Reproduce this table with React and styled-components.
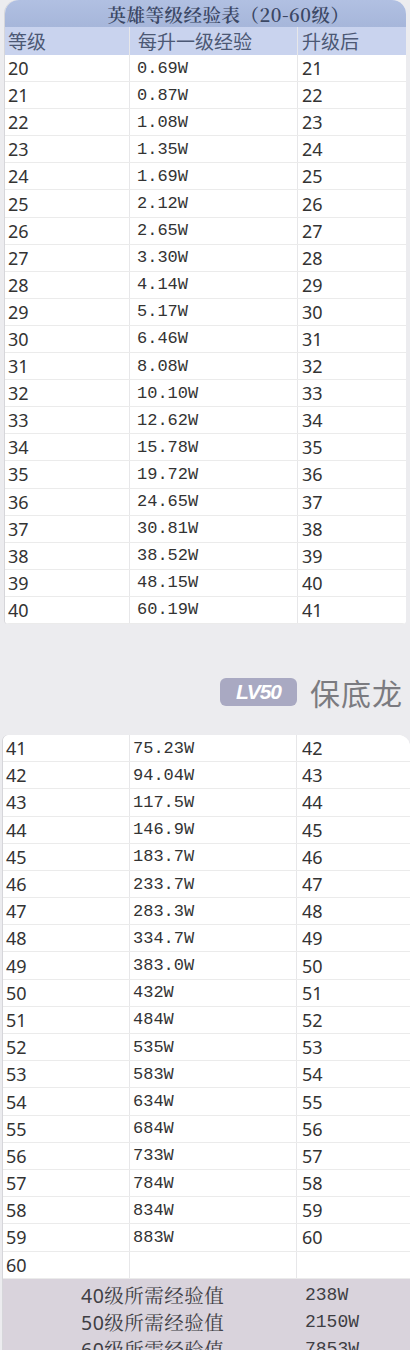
import React from 'react'
import styled, { createGlobalStyle } from 'styled-components'

const GlobalStyle = createGlobalStyle`
  html, body {
    margin: 0;
    padding: 0;
    background: #ececef;
  }
  body {
    width: 410px;
    height: 1350px;
    overflow: hidden;
    font-family: "Noto Sans", "Noto Sans CJK SC", sans-serif;
  }
`

const Page = styled.div`
  display: flex;
  flex-direction: column;
  width: 410px;
`

const Card = styled.div`
  margin-left: ${props => props.offset}px;
  width: ${props => props.width}px;
  background: #fff;
  border-radius: ${props => props.radius};
  overflow: hidden;
  box-shadow: -1px 0 0 #d6d6da;
`

const TitleBar = styled.div`
  height: 27px;
  display: flex;
  align-items: center;
  justify-content: center;
  padding-left: 46px;
  background: linear-gradient(180deg, #b1c0e2 0%, #a6b6da 100%);
  color: #3b4764;
  font-family: "Noto Serif CJK SC", "Noto Sans CJK SC", serif;
  font-size: 18.5px;
  font-weight: 600;
  letter-spacing: 0.5px;
`

const Row = styled.div`
  display: grid;
  grid-template-columns: ${props => props.cols};
  height: ${props => props.h || 27}px;
  background: ${props => props.bg || '#fff'};
  border-bottom: 1px solid ${props => props.line || '#ebebeb'};
  box-sizing: border-box;
`

const Cell = styled.div`
  display: flex;
  align-items: center;
  padding-left: ${props => props.pad}px;
  border-right: ${props => (props.last ? 'none' : '1px solid #e7e7e9')};
  color: ${props => props.color || '#333'};
  font-family: ${props =>
    props.mono
      ? '"Liberation Mono", "Noto Sans CJK SC", monospace'
      : '"Noto Sans", "Noto Sans CJK SC", sans-serif'};
  font-size: ${props => (props.mono ? '17px' : props.big ? '19px' : '18px')};
  white-space: nowrap;
`

const Divider = styled.div`
  height: 111px;
  display: flex;
  align-items: center;
  justify-content: flex-end;
  gap: 13px;
  padding-right: 7px;
  padding-top: 26px;
  box-sizing: border-box;
`

const Badge = styled.div`
  width: 77px;
  height: 28px;
  border-radius: 6px;
  background: #a9a9c2;
  color: #fff;
  display: flex;
  align-items: center;
  justify-content: center;
  font-family: "Liberation Sans", Arial, sans-serif;
  font-style: italic;
  font-weight: 700;
  font-size: 21px;
  letter-spacing: -1px;
`

const BadgeText = styled.div`
  color: #7b7b80;
  font-family: "Noto Sans CJK SC", sans-serif;
  font-size: 30px;
  line-height: 1;
  letter-spacing: 1px;
`

const Footer = styled.div`
  background: #d9d3dc;
  display: flex;
  flex-direction: column;
  padding-top: 2px;
`

const FooterRow = styled.div`
  display: grid;
  grid-template-columns: 299px 1fr;
  height: 27px;
  align-items: center;
  color: #3e3e44;
`

const FooterLabel = styled.div`
  padding-left: 78px;
  font-family: "Noto Sans", "Noto Serif CJK SC", "Noto Sans CJK SC", sans-serif;
  font-size: 19.5px;
  letter-spacing: 0.5px;
`

const FooterValue = styled.div`
  padding-left: 3px;
  font-family: "Liberation Mono", monospace;
  font-size: 18px;
`

const topRows = [
  ['20', '0.69W', '21'],
  ['21', '0.87W', '22'],
  ['22', '1.08W', '23'],
  ['23', '1.35W', '24'],
  ['24', '1.69W', '25'],
  ['25', '2.12W', '26'],
  ['26', '2.65W', '27'],
  ['27', '3.30W', '28'],
  ['28', '4.14W', '29'],
  ['29', '5.17W', '30'],
  ['30', '6.46W', '31'],
  ['31', '8.08W', '32'],
  ['32', '10.10W', '33'],
  ['33', '12.62W', '34'],
  ['34', '15.78W', '35'],
  ['35', '19.72W', '36'],
  ['36', '24.65W', '37'],
  ['37', '30.81W', '38'],
  ['38', '38.52W', '39'],
  ['39', '48.15W', '40'],
  ['40', '60.19W', '41'],
]

const bottomRows = [
  ['41', '75.23W', '42'],
  ['42', '94.04W', '43'],
  ['43', '117.5W', '44'],
  ['44', '146.9W', '45'],
  ['45', '183.7W', '46'],
  ['46', '233.7W', '47'],
  ['47', '283.3W', '48'],
  ['48', '334.7W', '49'],
  ['49', '383.0W', '50'],
  ['50', '432W', '51'],
  ['51', '484W', '52'],
  ['52', '535W', '53'],
  ['53', '583W', '54'],
  ['54', '634W', '55'],
  ['55', '684W', '56'],
  ['56', '733W', '57'],
  ['57', '784W', '58'],
  ['58', '834W', '59'],
  ['59', '883W', '60'],
  ['60', '', ''],
]

const totals = [
  ['40级所需经验值', '238W'],
  ['50级所需经验值', '2150W'],
  ['60级所需经验值', '7853W'],
]

function DataRow({ cells, cols, pads, h }) {
  return (
    <Row cols={cols} h={h}>
      <Cell pad={pads[0]}>{cells[0]}</Cell>
      <Cell pad={pads[1]} mono>{cells[1]}</Cell>
      <Cell pad={pads[2]} last>{cells[2]}</Cell>
    </Row>
  )
}

export default function App() {
  const topCols = '125px 168px 1fr'
  const bottomCols = '127px 167px 1fr'
  return (
    <Page>
      <GlobalStyle />
      <Card offset={5} width={401} radius="14px 14px 4px 4px">
        <TitleBar>英雄等级经验表（20-60级）</TitleBar>
        <Row cols={topCols} bg="#c9d3ee" line="#c9d3ee" h={28}>
          <Cell pad={3} color="#4c5874" big>等级</Cell>
          <Cell pad={8} color="#4c5874" big>每升一级经验</Cell>
          <Cell pad={4} color="#4c5874" big last>升级后</Cell>
        </Row>
        {topRows.map(r => (
          <DataRow key={r[0]} cells={r} cols={topCols} pads={[3, 7, 4]} h={27.1} />
        ))}
      </Card>

      <Divider>
        <Badge>LV50</Badge>
        <BadgeText>保底龙</BadgeText>
      </Divider>

      <Card offset={3} width={407} radius="6px 12px 0 0">
        {bottomRows.map(r => (
          <DataRow key={r[0]} cells={r} cols={bottomCols} pads={[3, 3, 5]} h={27.2} />
        ))}
        <Footer>
          {totals.map(t => (
            <FooterRow key={t[0]}>
              <FooterLabel>{t[0]}</FooterLabel>
              <FooterValue>{t[1]}</FooterValue>
            </FooterRow>
          ))}
        </Footer>
      </Card>
    </Page>
  )
}
